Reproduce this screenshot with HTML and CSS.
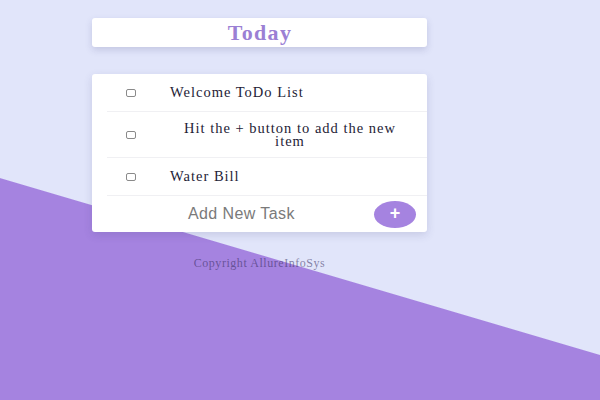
FILE: index.html
```html
<!DOCTYPE html>
<html>
<head>
<meta charset="utf-8">
<link rel="stylesheet" href="styles.css">
</head>
<body>
<main class="app">
  <header class="title-card"><h1 class="title">Today</h1></header>
  <section class="list-card">
    <div class="item">
      <span class="check"></span>
      <span class="label">Welcome ToDo List</span>
    </div>
    <div class="item item-tall">
      <span class="check"></span>
      <span class="label label-center">Hit the + button to add the new item</span>
    </div>
    <div class="item">
      <span class="check"></span>
      <span class="label">Water Bill</span>
    </div>
    <div class="add-row">
      <span class="placeholder">Add New Task</span>
      <button class="add-btn">+</button>
    </div>
  </section>
  <footer class="copy">Copyright AllureInfoSys</footer>
</main>
</body>
</html>
```
FILE: styles.css
```css
html {
  height: 100%;
  background: linear-gradient(196.43deg, #e1e5fa 340px, #a583e0 341px);
}
body {
  margin: 0;
  height: 100%;
  font-family: "Liberation Serif", serif;
}
.app {
  width: 335px;
  margin-left: 92px;
  padding-top: 18px;
}
.title-card {
  background: #fff;
  height: 29px;
  border-radius: 3px;
  box-shadow: 0 3px 7px rgba(60, 60, 120, 0.18);
  display: flex;
  align-items: center;
  justify-content: center;
}
.title {
  margin: 0 0 0 1px;
  font-size: 22px;
  font-weight: bold;
  color: #9b80d4;
  line-height: 1;
  letter-spacing: 1.3px;
}
.list-card {
  margin-top: 27px;
  background: #fff;
  border-radius: 3px;
  box-shadow: 0 3px 8px rgba(60, 60, 120, 0.16);
  padding-left: 15px;
}
.item {
  display: flex;
  align-items: center;
  height: 37px;
  border-bottom: 1px solid #f0f0f3;
}
.item-tall {
  height: 45px;
}
.check {
  width: 8px;
  height: 6px;
  border: 1px solid #8a8a8a;
  border-radius: 2px;
  margin-left: 19px;
  flex: none;
}
.label {
  margin-left: 34px;
  font-size: 14.5px;
  color: #1e2236;
  line-height: 13px;
  letter-spacing: 1px;
}
.label-center {
  width: 240px;
  text-align: center;
}
.add-row {
  height: 36px;
  display: flex;
  align-items: center;
  justify-content: space-between;
  padding-right: 11px;
}
.placeholder {
  margin-left: 81px;
  font-family: "Liberation Sans", Arial, sans-serif;
  font-size: 16px;
  color: #7a7a7a;
  letter-spacing: 0.4px;
}
.add-btn {
  width: 42px;
  height: 27px;
  border: none;
  border-radius: 50%;
  background: #a583e0;
  color: #fff;
  font-family: "Liberation Sans", Arial, sans-serif;
  font-size: 18px;
  font-weight: bold;
  line-height: 1;
  padding: 0 0 2px;
}
.copy {
  margin-top: 24px;
  text-align: center;
  font-size: 12px;
  letter-spacing: 0.55px;
  color: rgba(50, 40, 90, 0.55);
}
```
